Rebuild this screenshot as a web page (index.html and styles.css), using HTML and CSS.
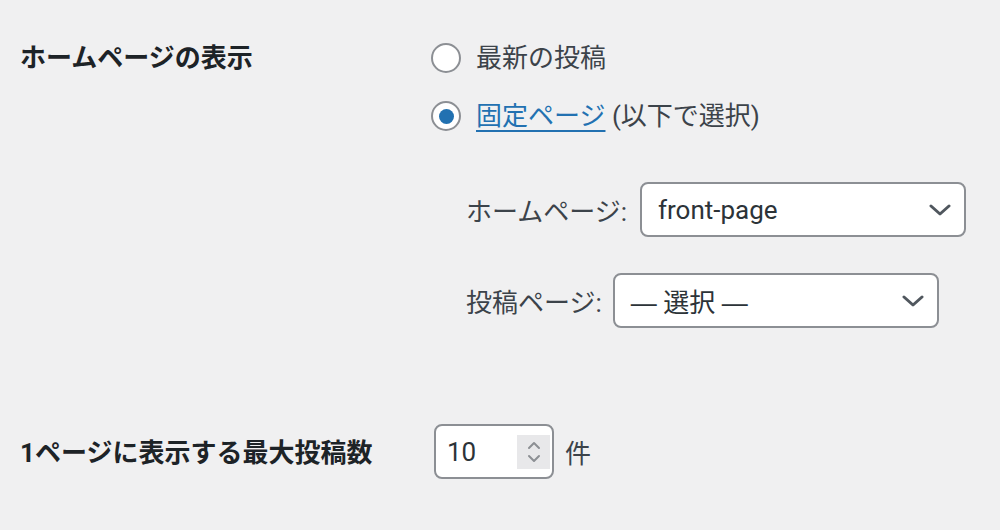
FILE: index.html
```html
<!DOCTYPE html>
<html lang="ja">
<head>
<meta charset="utf-8">
<link rel="stylesheet" href="styles.css">
</head>
<body>
<div class="form">
  <div class="row row-front">
    <div class="th">ホームページの表示</div>
    <div class="td">
      <div class="radio-line">
        <span class="radio"></span>
        <span class="radio-text">最新の投稿</span>
      </div>
      <div class="radio-line">
        <span class="radio checked"><span class="dot"></span></span>
        <span class="radio-text"><a class="link" href="#">固定ページ</a> (以下で選択)</span>
      </div>
      <div class="selects">
        <div class="select-line">
          <span class="select-label">ホームページ:</span>
          <div class="select select-home">
            <span class="select-value">front-page</span>
            <svg class="chev" width="22" height="12" viewBox="0 0 22 12"><path d="M2 2 L11 10 L20 2" fill="none" stroke="#50575e" stroke-width="3" stroke-linecap="round" stroke-linejoin="round"/></svg>
          </div>
        </div>
        <div class="select-line">
          <span class="select-label">投稿ページ:</span>
          <div class="select">
            <span class="select-value"><span class="dash">—</span> 選択 <span class="dash">—</span></span>
            <svg class="chev" width="22" height="12" viewBox="0 0 22 12"><path d="M2 2 L11 10 L20 2" fill="none" stroke="#50575e" stroke-width="3" stroke-linecap="round" stroke-linejoin="round"/></svg>
          </div>
        </div>
      </div>
    </div>
  </div>
  <div class="row row-posts">
    <div class="th th-mid">1ページに表示する最大投稿数</div>
    <div class="td td-mid">
      <div class="number">
        <span class="number-value">10</span>
        <span class="spinner">
          <svg width="16" height="26" viewBox="0 0 16 26"><path d="M3 9 L8 4 L13 9" fill="none" stroke="#8c8f94" stroke-width="2" stroke-linecap="round" stroke-linejoin="round"/><path d="M3 17 L8 22 L13 17" fill="none" stroke="#8c8f94" stroke-width="2" stroke-linecap="round" stroke-linejoin="round"/></svg>
        </span>
      </div>
      <span class="unit">件</span>
    </div>
  </div>
</div>
</body>
</html>
```

FILE: styles.css
```css
html, body {
  margin: 0;
  padding: 0;
  background: #f0f0f1;
}
body {
  font-family: Roboto, "Noto Sans CJK JP", sans-serif;
  font-size: 26px;
  color: #3c434a;
}
.form {
  padding-left: 20px;
}
.row {
  display: grid;
  grid-template-columns: 411px 1fr;
}
.th {
  font-weight: 700;
  color: #1d2327;
  line-height: 30px;
  padding-top: 43px;
}
.td {
  padding-top: 43px;
}
.radio-line {
  display: flex;
  align-items: center;
  height: 30px;
  margin-bottom: 28px;
}
.radio {
  box-sizing: border-box;
  width: 30px;
  height: 30px;
  border: 2px solid #8c8f94;
  border-radius: 50%;
  background: #fff;
  display: flex;
  align-items: center;
  justify-content: center;
  margin-right: 15px;
  flex: none;
}
.dot {
  width: 15px;
  height: 15px;
  border-radius: 50%;
  background: #2271b1;
}
.radio-text {
  line-height: 30px;
  white-space: nowrap;
}
.link {
  color: #2271b1;
  text-decoration: underline;
  text-underline-offset: 5px;
  text-decoration-thickness: 2px;
}
.selects {
  padding-left: 35px;
  padding-top: 23px;
}
.select-line {
  display: flex;
  align-items: center;
  margin-bottom: 36px;
}
.select-label {
  margin-right: 11px;
  white-space: nowrap;
}
.select {
  box-sizing: border-box;
  width: 326px;
  height: 55px;
  border: 2px solid #8c8f94;
  border-radius: 8px;
  background: #fff;
  display: flex;
  align-items: center;
  justify-content: space-between;
  padding: 0 13px 0 16px;
  color: #2c3338;
}
.select-home {
  margin-left: 2px;
}
.select-value {
  white-space: nowrap;
}
.dash {
  font-family: "Liberation Sans", sans-serif;
}
.row-posts {
  margin-top: 60px;
}
.th-mid {
  padding-top: 14px;
}
.td-mid {
  padding-top: 0;
  display: flex;
  align-items: center;
  margin-left: 3px;
}
.number {
  box-sizing: border-box;
  width: 120px;
  height: 55px;
  border: 2px solid #8c8f94;
  border-radius: 8px;
  background: #fff;
  display: flex;
  align-items: center;
  justify-content: space-between;
  padding: 0 2px 0 11px;
  color: #2c3338;
}
.spinner {
  width: 33px;
  height: 34px;
  background: #e8e8ea;
  display: flex;
  align-items: center;
  justify-content: center;
}
.unit {
  margin-left: 11px;
}
```
